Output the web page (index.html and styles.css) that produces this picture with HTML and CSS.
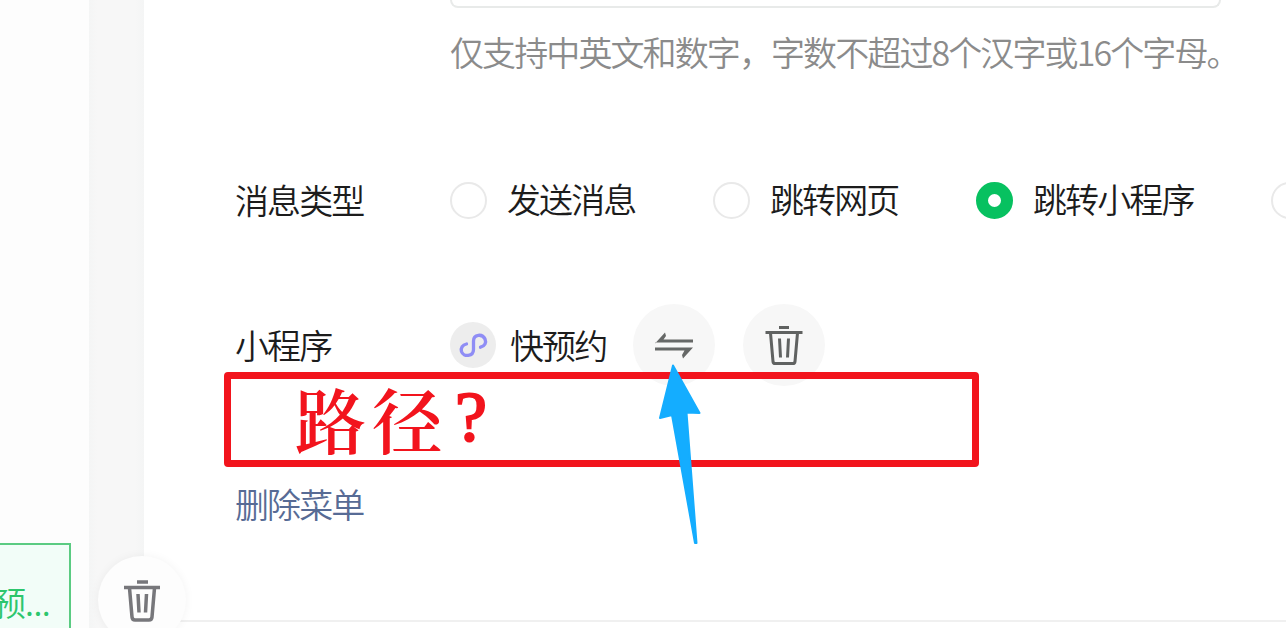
FILE: index.html
```html
<!DOCTYPE html>
<html lang="zh-CN">
<head>
  <meta charset="UTF-8">
  <meta name="viewport" content="width=device-width, initial-scale=1.0">
  <title>自定义菜单</title>
  <link rel="stylesheet" href="styles.css">
</head>
<body>
  <div class="page">
    <div class="preview">
      <div class="menu-item">预<span class="ellipsis">...</span></div>
    </div>
    <div class="gutter"></div>
    <div class="editor">
      <div class="name-input"></div>
      <div class="hint">仅支持中英文和数字，字数不超过8个汉字或16个字母。</div>

      <div class="form-row type-row">
        <div class="label">消息类型</div>
        <div class="radio-group">
          <label class="radio"><span class="dot"></span><span class="radio-text">发送消息</span></label>
          <label class="radio"><span class="dot"></span><span class="radio-text">跳转网页</span></label>
          <label class="radio wide"><span class="dot checked"></span><span class="radio-text">跳转小程序</span></label>
          <label class="radio"><span class="dot"></span></label>
        </div>
      </div>

      <div class="form-row app-row">
        <div class="label">小程序</div>
        <div class="app">
          <svg class="app-logo" viewBox="0 0 46 46">
            <circle cx="23" cy="23" r="23" fill="#ededed"/>
            <path d="M30.500 25.200C35 24 36.500 20.500 35 17C32.500 11.500 23.500 12 23.500 19V27.500C23.500 34.500 13.500 35.500 11.500 29.500C10.500 26 12.500 22.800 16.500 22" fill="none" stroke="#8f8df5" stroke-width="3.300" stroke-linecap="round"/>
          </svg>
          <span class="app-name">快预约</span>
          <button class="round-btn">
            <svg width="82" height="82" viewBox="0 0 82 82">
              <path d="M22 39.500L32 28.500L33 32L30.500 35.500H60V38.500H22ZM22 43.500H60L50 54.500L49 51L51.500 46.500H22Z" fill="#666867"/>
            </svg>
          </button>
          <button class="round-btn">
            <svg width="82" height="82" viewBox="0 0 82 82" fill="none" stroke="#606261" stroke-width="3">
              <path d="M36 23.500H46M22.500 28.500H59.500M27.500 29L30 57.500Q30.200 59.500 32.200 59.500H49.800Q51.800 59.500 52 57.500L54.500 29M36.500 34.500L37.500 53.500M45.500 34.500L44.500 53.500"/>
            </svg>
          </button>
        </div>
      </div>

      <div class="path-box">路径<span class="question">?</span></div>
      <a class="delete-link">删除菜单</a>
      <div class="divider"></div>
    </div>
  </div>

  <svg class="arrow" width="46" height="184" viewBox="0 0 46 184">
    <path d="M15 3.500L41.500 51L28.500 50.500L38.500 181H37L14 53L2 56Z" fill="#14adff" stroke="#14adff" stroke-width="2" stroke-linejoin="round"/>
  </svg>

  <button class="float-btn">
    <svg width="88" height="88" viewBox="0 0 88 88" fill="none" stroke="#77777b" stroke-width="3.500">
      <path d="M39 26H50M26 31.500H62M31.500 32L34 61Q34.300 64 37 64H51Q53.700 64 54 61L56.500 32M40 38L41 56.500M48.500 38L47.500 56.500"/>
    </svg>
  </button>
</body>
</html>
```

FILE: styles.css
```css
body {
  margin: 0;
  overflow: hidden;
  background-color: #fff;
  color: #1c1c1c;
  font-family: "Noto Sans CJK SC", sans-serif;
  font-size: 34px;
  font-weight: 350;
  letter-spacing: -1.9px;
  line-height: 48px;
}

button {
  border: none;
  padding: 0;
}

.page {
  display: flex;
  height: 628px;
}

.preview {
  display: flex;
  flex-direction: column;
  justify-content: flex-end;
  width: 89px;
  background-color: #fdfdfd;
}

.menu-item {
  box-sizing: border-box;
  width: 71px;
  height: 85px;
  padding-top: 33px;
  border: 2px solid #5bcb82;
  border-left: none;
  border-bottom: none;
  background-color: #f2fdf8;
  color: #2dc66d;
  text-indent: -7px;
  font-size: 33px;
  white-space: nowrap;
}

.ellipsis {
  margin-left: 1px;
  letter-spacing: -0.5px;
}

.gutter {
  width: 55px;
  background: linear-gradient(to right, #f4f5f5, #f7f7f7 8px, #f7f7f7 46px, #f4f5f5);
}

.editor {
  display: flex;
  flex-direction: column;
  flex: 1;
  min-width: 0;
  overflow: hidden;
}

.name-input {
  flex-shrink: 0;
  box-sizing: border-box;
  width: 771px;
  height: 8px;
  margin-left: 306px;
  border: 2px solid #e8eae9;
  border-top: none;
  border-radius: 0 0 8px 8px;
}

.hint {
  margin: 20px 0 0 306px;
  color: #8b8b8b;
  letter-spacing: -1.9px;
  white-space: nowrap;
}

.form-row {
  display: flex;
  align-items: center;
  margin-left: 91px;
}

.label {
  flex-shrink: 0;
  width: 215px;
}

.type-row {
  margin-top: 99px;
  height: 50px;
}

.radio-group {
  display: flex;
}

.radio {
  display: flex;
  align-items: center;
  flex-shrink: 0;
  width: 263px;
  white-space: nowrap;
}

.radio.wide {
  width: 295px;
}

.radio-text {
  line-height: 44px;
  padding-bottom: 3px;
}

.dot {
  box-sizing: border-box;
  flex-shrink: 0;
  width: 37px;
  height: 37px;
  margin-right: 20px;
  border: 2px solid #e9e9e9;
  border-radius: 50%;
}

.dot.checked {
  border: 12px solid #07c160;
}

.app-row {
  height: 82px;
  margin-top: 79px;
}

.app {
  display: flex;
  align-items: center;
}

.app-logo {
  width: 46px;
  height: 46px;
}

.app-name {
  width: 123px;
  margin-left: 14px;
}

.round-btn {
  width: 82px;
  height: 82px;
  margin-right: 28px;
  border-radius: 50%;
  background-color: #f7f7f7;
}

.round-btn svg,
.float-btn svg {
  display: block;
}

/* path box covers the lower edge of the round buttons */
.path-box {
  display: flex;
  align-items: center;
  flex-shrink: 0;
  box-sizing: border-box;
  width: 755px;
  height: 95px;
  margin: -14px 0 0 80px;
  padding: 0 0 5px 64px;
  border: 7px solid #f2141d;
  border-radius: 4px;
  color: #f2141d;
  font-family: "Noto Serif CJK SC", "Noto Sans CJK SC", serif;
  font-size: 71px;
  font-weight: 600;
  letter-spacing: 6px;
  line-height: 74px;
}

.question {
  margin-left: 6px;
  font-family: "Liberation Serif", serif;
  font-size: 72px;
  font-weight: 400;
  -webkit-text-stroke: 2px #f2141d;
}

.delete-link {
  margin: 13px 0 0 91px;
  color: #576b95;
}

.divider {
  flex-shrink: 0;
  height: 2px;
  margin-top: 92px;
  background-color: #f0f0f0;
}

.arrow {
  position: absolute;
  left: 658px;
  top: 362px;
}

.float-btn {
  position: absolute;
  left: 98px;
  top: 556px;
  width: 88px;
  height: 88px;
  border-radius: 50%;
  background-color: #fdfdfd;
  box-shadow: 0 0 10px rgba(0, 0, 0, 0.05);
}
```
